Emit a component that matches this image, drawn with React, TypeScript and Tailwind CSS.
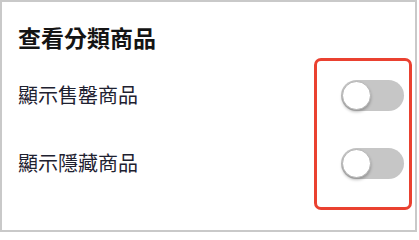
import React from 'react'

const font = { fontFamily: '"Noto Sans CJK TC", "Noto Sans", sans-serif' }

function Toggle() {
    return (
        <div className="flex h-[31px] w-[63px] items-center rounded-full bg-[#c6c6c6] px-[1px]">
            <div className="h-[29px] w-[29px] rounded-full border border-[#b4b4b4] bg-white shadow-[0_2px_3px_rgba(0,0,0,0.25)]" />
        </div>
    )
}

export default function App() {
    const rows = ['顯示售罄商品', '顯示隱藏商品']

    return (
        <div className="h-[234px] w-[419px] bg-white" style={font}>
            <div className="relative flex h-[232px] w-[417px] flex-col border-2 border-[#c9c9c9] bg-white pl-[16px] pr-[11px] pt-[21px]">
                <div className="text-[23px] font-bold leading-[28px] text-[#141414]">查看分類商品</div>

                <div className="mt-[29px] flex flex-col gap-[37px]">
                    {rows.map((label) => (
                        <div key={label} className="flex h-[31px] items-center justify-between">
                            <span className="-mt-[2px] text-[20px] leading-[28px] text-[#1e2130]">{label}</span>
                            <Toggle />
                        </div>
                    ))}
                </div>

                {/* annotation box */}
                <div className="absolute left-[312px] top-[56px] h-[152px] w-[98px] rounded-[7px] border-[3px] border-[#ea4130]" />
            </div>
        </div>
    )
}
